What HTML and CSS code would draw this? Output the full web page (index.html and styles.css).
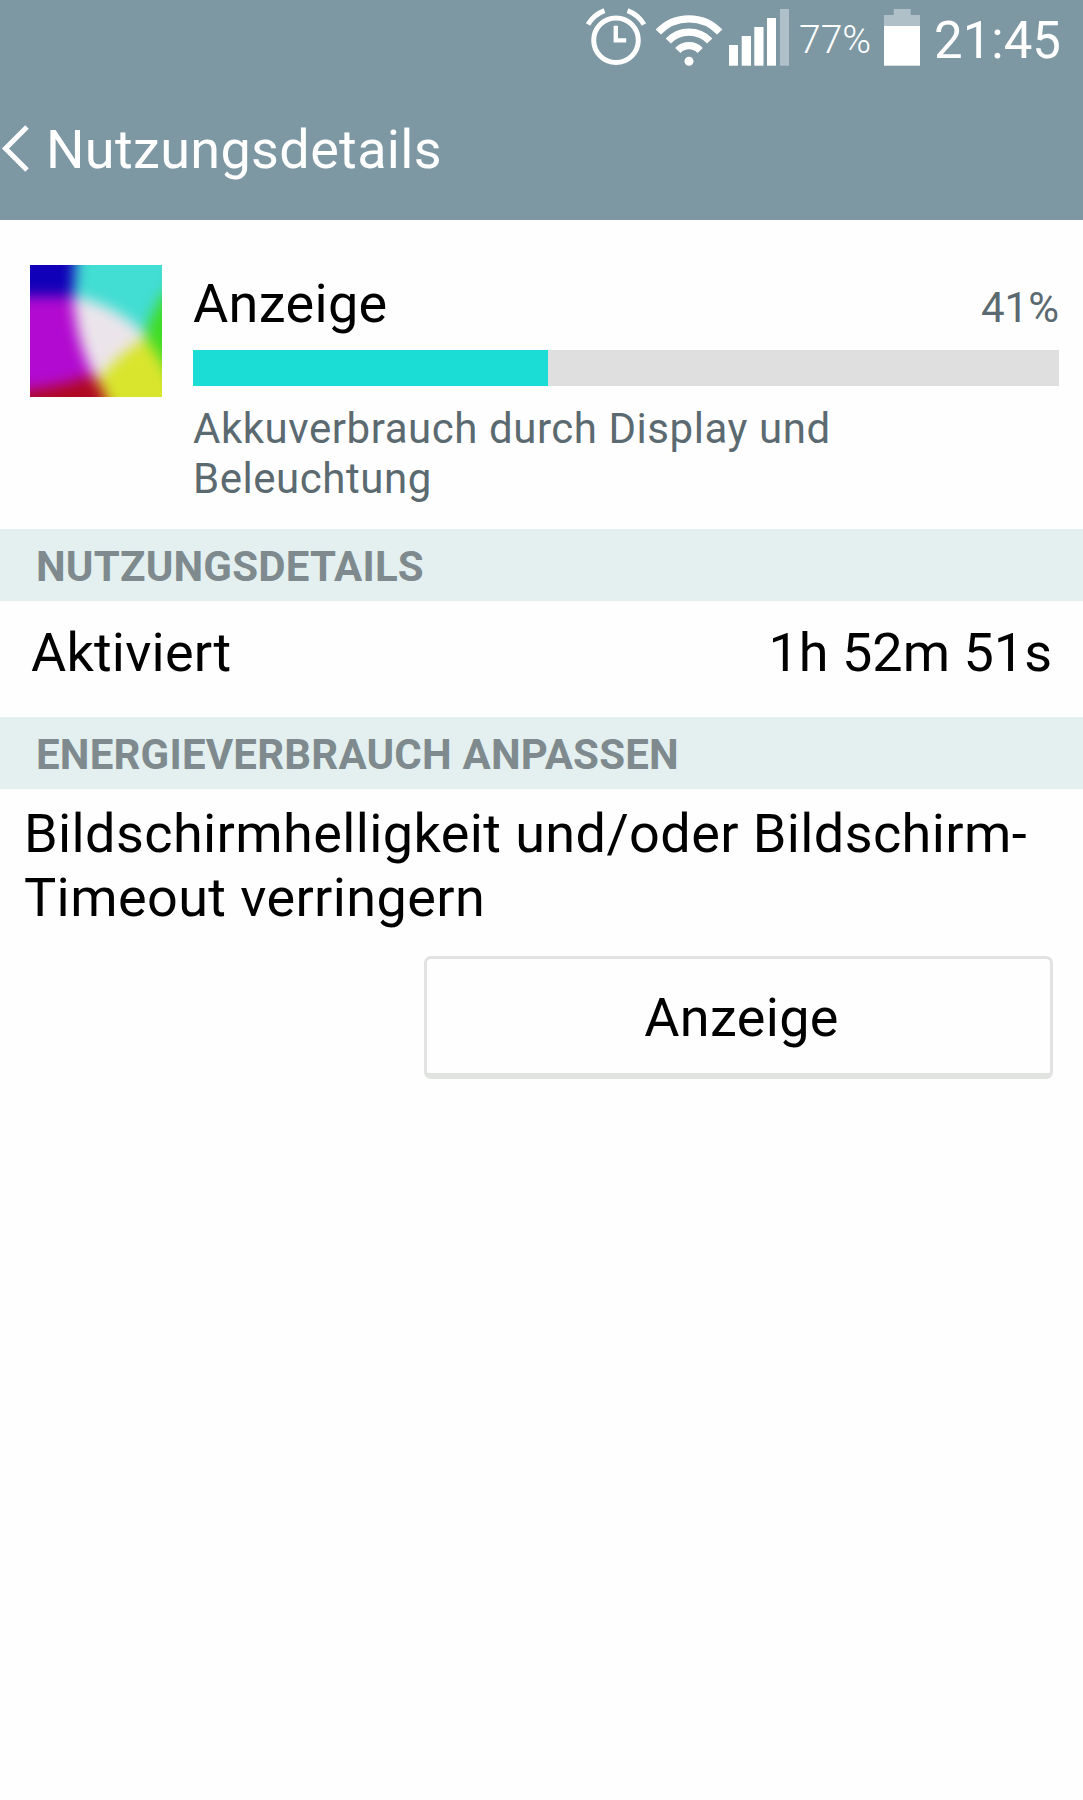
FILE: index.html
```html
<!DOCTYPE html>
<html lang="de">
<head>
	<meta charset="UTF-8">
	<meta name="viewport" content="width=device-width, initial-scale=1.0">
	<title>Nutzungsdetails</title>

	<link rel="stylesheet" href="styles.css">

</head>
<body>

	<header class="header">
		<div class="statusbar">
			<svg class="icon-alarm" width="64" height="64" viewBox="0 0 64 64" fill="none" stroke="#fff" stroke-width="5">
				<circle cx="32" cy="32.3" r="22.3" />
				<path d="M4 16.5A32 32 0 0 1 20.5 2.6M43.5 2.6A32 32 0 0 1 60 16.5" />
				<path d="M31.8 17.7V32.4H42.2" stroke-width="4.4" />
			</svg>
			<svg class="icon-wifi" width="70" height="64" viewBox="0 0 70 64" fill="none" stroke="#fff" stroke-width="7.3">
				<path d="M4.3 24A42.3 42.3 0 0 1 65.7 24" />
				<path d="M14.3 33A28.8 28.8 0 0 1 55.7 33" />
				<path d="M23.8 42.5A15.4 15.4 0 0 1 46.2 42.5" />
				<circle cx="35" cy="53.2" r="4.5" fill="#fff" stroke="none" />
			</svg>
			<svg class="icon-signal" width="62" height="64" viewBox="0 0 62 64" fill="#fff">
				<rect x="1" y="37" width="9" height="20.7" />
				<rect x="13.7" y="28" width="9.3" height="29.7" />
				<rect x="26.3" y="19" width="9.2" height="38.7" />
				<rect x="39" y="10" width="9" height="47.7" />
				<rect x="52" y="1" width="9" height="56.7" fill="#afc0c8" />
			</svg>
			<span class="battery-level">77%</span>
			<svg class="icon-battery" width="36" height="64" viewBox="0 0 36 64" fill="#fff">
				<path d="M9.7 1H26.7V7H36V18H0V7H9.7z" fill="#afc0c8" />
				<rect y="18" width="36" height="39.7" />
			</svg>
			<span class="clock">21:45</span>
		</div>
		<div class="titlebar">
			<svg class="icon-back" width="32" height="50" viewBox="0 0 32 50" fill="none" stroke="#fff" stroke-width="5">
				<path d="M27 4L5.5 25.5L27 47" />
			</svg>
			<h1 class="title">Nutzungsdetails</h1>
		</div>
	</header>

	<main>
		<section class="usage">
			<svg class="usage-icon" width="132" height="132" viewBox="0 0 132 132">
				<defs>
					<filter id="soft" x="-20%" y="-20%" width="140%" height="140%" color-interpolation-filters="sRGB">
						<feGaussianBlur stdDeviation="7" />
					</filter>
				</defs>
				<g filter="url(#soft)">
					<rect x="-30" y="-30" width="192" height="192" fill="#b00820" />
					<path d="M-30 -30H46V31H-30z" fill="#1000b8" />
					<path d="M-30 31H43C47 65 52 90 64 109Q36 122 -30 129z" fill="#b20ad0" />
					<path d="M47 -30H162V0L112 72Q80 44 43 37z" fill="#42ddd3" />
					<path d="M112 72L130 34L162 0V130H140z" fill="#3fdc24" />
					<path d="M112 72Q127 84 140 112L162 162H85Q76 130 66 112z" fill="#d9e52c" />
					<path d="M43 31Q88 40 118 72Q88 88 67 117Q46 80 43 31z" fill="#ebe5eb" />
				</g>
			</svg>
			<div class="usage-body">
				<div class="usage-head">
					<span class="usage-name">Anzeige</span>
					<span class="usage-percent">41%</span>
				</div>
				<div class="progress">
					<div class="progress-value" style="width: 41%"></div>
				</div>
				<p class="usage-desc">Akkuverbrauch durch Display und Beleuchtung</p>
			</div>
		</section>

		<h2 class="section-title">NUTZUNGSDETAILS</h2>
		<div class="row">
			<span class="row-label">Aktiviert</span>
			<span class="row-value">1h 52m 51s</span>
		</div>

		<h2 class="section-title">ENERGIEVERBRAUCH ANPASSEN</h2>
		<p class="hint">Bildschirmhelligkeit und/oder Bildschirm-<br>Timeout verringern</p>
		<div class="actions">
			<button type="button" class="button">Anzeige</button>
		</div>
	</main>

</body>
</html>
```
FILE: styles.css
```css
* {
	box-sizing: border-box;
}
body {
	margin: 0;
	min-height: 1800px;
	background-color: #fefefe;
	color: #000;
	font-family: Roboto, "Liberation Sans", sans-serif;
	font-size: 54px;
}
h1, h2, p {
	margin: 0;
	font-weight: normal;
}
svg {
	display: block;
	flex: none;
}

/* header */
.header {
	height: 220px;
	background-color: #7d98a3;
	color: #fff;
}
.statusbar {
	display: flex;
	align-items: center;
	justify-content: flex-end;
	height: 80px;
	padding-right: 22px;
}
.icon-wifi {
	margin-left: 6px;
}
.icon-signal {
	margin-left: 4px;
}
.battery-level {
	width: 74px;
	margin-left: 9px;
	font-size: 39px;
	font-weight: 350;
	white-space: nowrap;
}
.icon-battery {
	margin-left: 11px;
}
.clock {
	width: 127px;
	margin-left: 14px;
	font-size: 51px;
	white-space: nowrap;
}
.titlebar {
	display: flex;
	align-items: center;
	height: 140px;
}
.icon-back {
	margin-top: -5px;
}
.title {
	margin: -2px 0 0 14px;
	font-size: 54px;
	letter-spacing: 0.35px;
}

/* usage */
.usage {
	display: flex;
	gap: 31px;
	height: 309px;
	padding: 45px 24px 0 30px;
}
.usage-body {
	flex: 1;
}
.usage-head {
	display: flex;
	align-items: baseline;
	justify-content: space-between;
	height: 85px;
	padding-top: 7px;
	line-height: 64px;
}
.usage-name {
	letter-spacing: 0.35px;
}
.usage-percent {
	color: #5b6a70;
	font-size: 42px;
}
.progress {
	height: 36px;
	background-color: #dfdfdf;
}
.progress-value {
	height: 100%;
	background-color: #1bddd6;
}
.usage-desc {
	width: 700px;
	padding-top: 18px;
	color: #5b6a70;
	font-size: 42px;
	line-height: 50px;
	letter-spacing: 0.55px;
}

/* sections */
.section-title {
	height: 72px;
	padding-left: 36px;
	background-color: #e4f0f0;
	color: #7e8a8d;
	font-size: 42px;
	font-weight: bold;
	line-height: 76px;
	letter-spacing: 0.2px;
}
.row {
	display: flex;
	justify-content: space-between;
	height: 116px;
	padding: 0 31px;
	line-height: 103px;
}
.row-label {
	letter-spacing: 0.2px;
}
.hint {
	padding: 13px 0 0 24px;
	line-height: 64px;
	letter-spacing: 0.4px;
	white-space: nowrap;
}
.actions {
	display: flex;
	justify-content: flex-end;
	padding: 26px 30px 0 0;
}
.button {
	width: 629px;
	height: 123px;
	padding: 3px 0 0 6px;
	border: 3px solid #e0e3e0;
	border-bottom-width: 6px;
	border-radius: 7px;
	background-color: #fefefe;
	color: #000;
	font: inherit;
	letter-spacing: 0.35px;
}
```
